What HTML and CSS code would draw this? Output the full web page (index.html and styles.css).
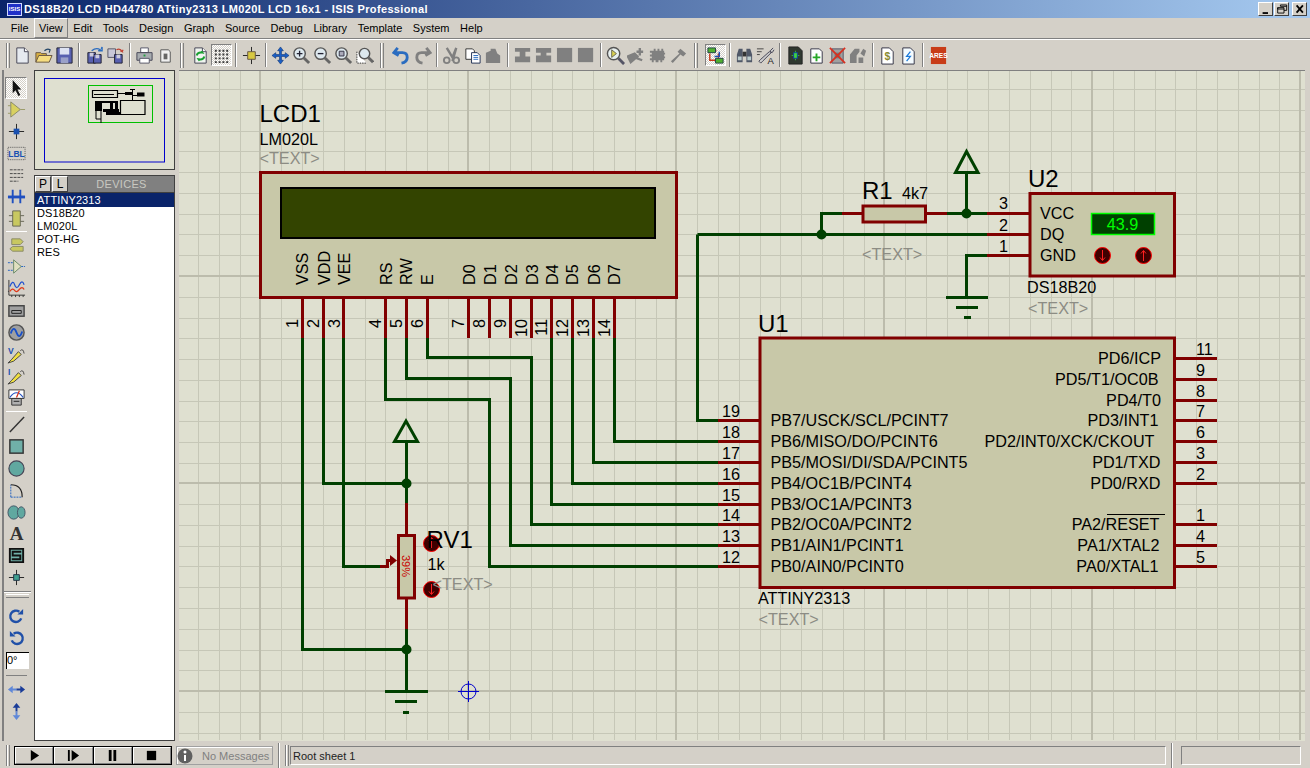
FILE: index.html
```html
<!DOCTYPE html>
<html lang="en">
<head>
<meta charset="utf-8">
<title>ISIS Professional</title>
<link rel="stylesheet" href="styles.css">
</head>
<body>
<header class="titlebar">
  <span class="logo">ISIS</span>
  <span class="title">DS18B20 LCD HD44780 ATtiny2313 LM020L LCD 16x1 - ISIS Professional</span>
  <span class="winbtns">
    <span class="winbtn"><svg viewBox="0 0 15 13"><path d="M4 10h6v2H4z"/></svg></span>
    <span class="winbtn"><svg viewBox="0 0 15 13"><path d="M6 2h7v6h-3M6 2v1.500h7M3 5h7v6H3zM3 5v1.500h7" fill="none" stroke="#000"/></svg></span>
    <span class="winbtn gap"><svg viewBox="0 0 15 13"><path d="M4 2.500l7 8M11 2.500l-7 8" stroke="#000" stroke-width="2"/></svg></span>
  </span>
</header>
<nav class="menubar">
  <span class="menu">File</span><span class="menu active">View</span><span class="menu">Edit</span><span class="menu">Tools</span><span class="menu">Design</span><span class="menu">Graph</span><span class="menu">Source</span><span class="menu">Debug</span><span class="menu">Library</span><span class="menu">Template</span><span class="menu">System</span><span class="menu">Help</span>
</nav>
<div class="toolbar">
  <i class="grip first"></i>
  <span class="btn"><svg viewBox="0 0 20 20"><path d="M4 2h8l4 4v12H4z" fill="#e6eaf0" stroke="#445"/><path d="M12 2v4h4" fill="#fff" stroke="#445"/></svg></span>
  <span class="btn"><svg viewBox="0 0 20 20"><path d="M2 17V7h5l1 1h5v2" fill="#d8b040" stroke="#654"/><path d="M2 17l3-7h14l-3 7z" fill="#f6dd80" stroke="#654"/><path d="M11 5q3-3 6-1l-1 3" fill="none" stroke="#246" stroke-width="1.200"/></svg></span>
  <span class="btn"><svg viewBox="0 0 20 20"><path d="M2 2h16v16H2z" fill="#5860b0" stroke="#223"/><path d="M5 2h10v7H5z" fill="#dde2f2"/><path d="M6 12h8v6H6z" fill="#9aa0c8"/></svg></span>
  <i class="sep"></i>
  <span class="btn"><svg viewBox="0 0 20 20"><path d="M3 7h8v11H3z" fill="#5860b0" stroke="#223"/><path d="M9 9h8v9H9z" fill="#5860b0" stroke="#223"/><path d="M5 7h4v4H5zM11 9h4v4h-4z" fill="#ccd"/><path d="M7 5q5-4 9-1l-2 1h4V1l-1 2" fill="none" stroke="#2a6cc0" stroke-width="1.400"/></svg></span>
  <span class="btn"><svg viewBox="0 0 20 20"><path d="M2 3h8v9H2z" fill="#c8c8d8" stroke="#556"/><path d="M9 9h8v9H9z" fill="#5860b0" stroke="#223"/><path d="M11 9h4v4h-4z" fill="#ccd"/><path d="M11 4q4-2 6 2l-2-1m2 1l1-2" fill="none" stroke="#c04030" stroke-width="1.300"/></svg></span>
  <i class="sep"></i>
  <span class="btn"><svg viewBox="0 0 20 20"><path d="M6 2h8v5H6z" fill="#fff" stroke="#556"/><path d="M2 7h16v8H2z" fill="#a8acb0" stroke="#445"/><path d="M5 13h10v5H5z" fill="#fff" stroke="#556"/><path d="M9 9h2v2H9z" fill="#20a040"/></svg></span>
  <span class="btn"><svg viewBox="0 0 20 20"><path d="M5 4h8l2 2v11H5z" fill="#f0f0f0" stroke="#555"/><path d="M8 8h4v6H8z" fill="#666"/></svg></span>
  <i class="grip mid"></i>
  <span class="btn"><svg viewBox="0 0 20 20"><path d="M4 2h8l4 4v12H4z" fill="#f0f4f0" stroke="#445"/><path d="M12 2v4h4" fill="#fff" stroke="#445"/><path d="M6 10q1-4 6-3l-1-1.500M14 11q-1 4-6 3l1 1.500" fill="none" stroke="#18a030" stroke-width="2"/></svg></span>
  <span class="btn on"><svg viewBox="0 0 20 20"><path d="M3 4h2v2H3zM7 4h2v2H7zM11 4h2v2h-2zM15 4h2v2h-2zM3 8h2v2H3zM7 8h2v2H7zM11 8h2v2h-2zM15 8h2v2h-2zM3 12h2v2H3zM7 12h2v2H7zM11 12h2v2h-2zM15 12h2v2h-2zM3 16h2v2H3zM7 16h2v2H7zM11 16h2v2h-2zM15 16h2v2h-2z" fill="#333"/></svg></span>
  <i class="sep"></i>
  <span class="btn"><svg viewBox="0 0 20 20"><path d="M10 1v18M1 10h18" stroke="#222"/><path d="M6 6h8v8H6z" fill="#d8c840" stroke="#654"/></svg></span>
  <i class="sep"></i>
  <span class="btn"><svg viewBox="0 0 20 20"><path d="M10 1l3 4h-2v4h4V7l4 3-4 3v-2h-4v4h2l-3 4-3-4h2v-4H5v2l-4-3 4-3v2h4V5H7z" fill="#1a60c8" stroke="#0a3070" stroke-width=".6"/></svg></span>
  <span class="btn"><svg viewBox="0 0 20 20"><circle cx="8" cy="8" r="6" fill="#dde8ee" stroke="#555" stroke-width="1.500"/><path d="M12 12l6 6" stroke="#666" stroke-width="3"/><path d="M5 8h6M8 5v6" stroke="#223" stroke-width="1.400"/></svg></span>
  <span class="btn"><svg viewBox="0 0 20 20"><circle cx="8" cy="8" r="6" fill="#dde8ee" stroke="#555" stroke-width="1.500"/><path d="M12 12l6 6" stroke="#666" stroke-width="3"/><path d="M5 8h6" stroke="#223" stroke-width="1.400"/></svg></span>
  <span class="btn"><svg viewBox="0 0 20 20"><circle cx="8" cy="8" r="6" fill="#dde8ee" stroke="#555" stroke-width="1.500"/><path d="M12 12l6 6" stroke="#666" stroke-width="3"/><path d="M5.500 5.500h5v5h-5z" fill="#aab" stroke="#334"/></svg></span>
  <span class="btn"><svg viewBox="0 0 20 20"><path d="M2 6v12h10" fill="#fff" stroke="#333" stroke-dasharray="1.500 1"/><circle cx="10" cy="8" r="5.500" fill="#dde8ee" stroke="#555" stroke-width="1.500"/><path d="M14 12l5 5" stroke="#666" stroke-width="3"/></svg></span>
  <i class="grip wide"></i>
  <span class="btn"><svg viewBox="0 0 20 20"><path d="M6 2L2 7l5 3M3 7h8q5 0 5 5t-6 6" fill="none" stroke="#2a6cc0" stroke-width="3"/></svg></span>
  <span class="btn"><svg viewBox="0 0 20 20"><path d="M14 2l4 5-5 3M17 7H9q-5 0-5 5t6 6" fill="none" stroke="#808080" stroke-width="3"/></svg></span>
  <i class="sep"></i>
  <span class="btn"><svg viewBox="0 0 20 20"><path d="M5 2l6 10 4-10-4 14M15 2" fill="none" stroke="#808080" stroke-width="2.500"/><circle cx="5" cy="15" r="3" fill="none" stroke="#808080" stroke-width="2"/><circle cx="15" cy="15" r="3" fill="none" stroke="#808080" stroke-width="2"/></svg></span>
  <span class="btn"><svg viewBox="0 0 20 20"><path d="M3 3h7l2 2v9H3z" fill="#fff" stroke="#333"/><path d="M9 7h6l3 3v8H9z" fill="#fff" stroke="#235"/><path d="M11 10h5M11 12h5M11 14h5" stroke="#2a6cc0"/></svg></span>
  <span class="btn"><svg viewBox="0 0 20 20"><path d="M2 7l5-2V3h5l2 5 3 2v8H2z" fill="#808080"/></svg></span>
  <i class="sep"></i>
  <span class="btn"><svg viewBox="0 0 20 20"><path d="M1 2h16v4h-5v5h5v6H1v-6h5V6H1z" fill="#808080"/></svg></span>
  <span class="btn"><svg viewBox="0 0 20 20"><path d="M1 2h16v5h-5v3h5v7H1v-7h5V7H1z" fill="#808080"/></svg></span>
  <span class="btn"><svg viewBox="0 0 20 20"><path d="M1 2h16v15H1z" fill="#808080"/></svg></span>
  <span class="btn"><svg viewBox="0 0 20 20"><path d="M1 2h16v15H1z" fill="#808080"/></svg></span>
  <i class="sep"></i>
  <span class="btn"><svg viewBox="0 0 20 20"><circle cx="8" cy="8" r="6.500" fill="#e8f0f0" stroke="#555" stroke-width="1.500"/><path d="M6 4l5 4-5 4z" fill="#d8d050" stroke="#665"/><path d="M13 13l6 6" stroke="#556" stroke-width="3"/></svg></span>
  <span class="btn"><svg viewBox="0 0 20 20"><path d="M1 11l7-3 3 3-7 6zM10 6h7M13.500 2v8M8 12l8 3" stroke="#808080" stroke-width="2.500" fill="#808080"/></svg></span>
  <span class="btn"><svg viewBox="0 0 20 20"><path d="M4 5h2V3h2v2h2V3h2v2h2V3h2v2h1v2h1v2h-1v2h1v2h-1v2h-2v2h-2v-2h-2v2H8v-2H6v2H4v-2H2v-2h2v-2H2V9h2V7H2V5z" fill="#808080"/></svg></span>
  <span class="btn"><svg viewBox="0 0 20 20"><path d="M9 6l3-3 6 5-3 3-3-2-8 9-2-2 9-8z" fill="#808080"/></svg></span>
  <i class="grip wide"></i>
  <span class="btn on"><svg viewBox="0 0 20 20"><path d="M11 5H5M4 8v7h6M13 8v6" fill="none" stroke="#c83818" stroke-width="1.500"/><path d="M14 6v5H9" fill="none" stroke="#2050b0" stroke-width="1.500"/><path d="M2 2h8v5H2zM10 13h8v5h-8z" fill="#50b030" stroke="#244"/></svg></span>
  <i class="sep"></i>
  <span class="btn"><svg viewBox="0 0 20 20"><path d="M2 9l2-6h4v14H2zM12 3h4l2 6v8h-6z" fill="#505868"/><path d="M8 6h4v5H8z" fill="#333"/><path d="M3 11h4v4H3zM13 11h4v4h-4z" fill="#bcc"/></svg></span>
  <span class="btn"><svg viewBox="0 0 20 20"><path d="M1 3h7M1 6h5M1 9h3" stroke="#444"/><path d="M18 2l-3 3 1 2-9 9-2 2-2-2 2-2 9-8 3 1 2-3" fill="#ccc" stroke="#445"/><text class="ico-a" x="12" y="19">A</text></svg></span>
  <i class="sep"></i>
  <span class="btn"><svg viewBox="0 0 20 20"><path d="M3 1h10l4 4v14H3z" fill="#303830" stroke="#222"/><path d="M6 10h8M10 5v10" stroke="#30c030"/><path d="M8 7h4v6H8z" fill="#40d040" stroke="#1040a0"/></svg></span>
  <span class="btn"><svg viewBox="0 0 20 20"><path d="M4 3h9l3 3v12H4z" fill="#fff" stroke="#334"/><path d="M9 8h2v3h3v2h-3v3H9v-3H6v-2h3z" fill="#28a828"/></svg></span>
  <span class="btn"><svg viewBox="0 0 20 20"><path d="M4 3h12v15H4z" fill="#a0a0a0" stroke="#556"/><path d="M7 7h6v6H7z" fill="#777"/><path d="M2 2l16 16M18 2L2 18" stroke="#d83020" stroke-width="1.800"/></svg></span>
  <span class="btn"><svg viewBox="0 0 20 20"><path d="M1 18V9l5-6h5v3l-3 4v8zM10 18v-6h5v6zM12 8l3-5 3 2-2 6z" fill="#808080"/></svg></span>
  <i class="sep"></i>
  <span class="btn"><svg viewBox="0 0 20 20"><path d="M4 2h8l4 4v13H4z" fill="#fff" stroke="#334"/><text class="ico-s" x="10" y="15">$</text></svg></span>
  <span class="btn"><svg viewBox="0 0 20 20"><path d="M4 2h8l4 4v13H4z" fill="#f4fbff" stroke="#334"/><path d="M12 6l-4 5h4l-4 5" fill="none" stroke="#1a78d8" stroke-width="1.300"/></svg></span>
  <i class="sep"></i>
  <span class="btn"><svg viewBox="0 0 20 20"><path d="M2 1h16v18H2z" fill="#c83c18"/><text class="ico-ares" x="10" y="13">ARES</text></svg></span>
</div>
<main class="workspace">
  <aside class="tools">
    <span class="tool on"><svg viewBox="0 0 20 20"><path d="M6 2v14l3-3 3 6 2-1-3-6h4z" fill="#111"/></svg></span>
    <span class="tool"><svg viewBox="0 0 20 20"><path d="M4 2l10 8-10 8z" fill="#d8d060" stroke="#886"/><path d="M14 10h5M1 6h3M1 14h3" stroke="#996"/></svg></span>
    <span class="tool"><svg viewBox="0 0 20 20"><path d="M10 2v16M2 10h16" stroke="#222"/><path d="M7 7h6v6H7z" fill="#1a50b0"/></svg></span>
    <span class="tool"><svg viewBox="0 0 20 20"><path d="M1 3.500h18v13H1z" fill="none" stroke="#555" stroke-dasharray="1 1"/><text class="ico-lbl" x="10" y="14">LBL</text></svg></span>
    <span class="tool"><svg viewBox="0 0 20 20"><path d="M3 4h14M3 8h14M3 12h14M3 16h9" stroke="#444" stroke-dasharray="3 1" fill="none"/></svg></span>
    <span class="tool"><svg viewBox="0 0 20 20"><path d="M6 3v14M14 3v14" stroke="#2050c0" stroke-width="2"/><path d="M1 9h18v3H1z" fill="#2050c0"/></svg></span>
    <span class="tool"><svg viewBox="0 0 20 20"><path d="M6 2h8v16H6z" fill="#c8c860" stroke="#665"/><path d="M2 7h4M2 13h4M14 7h4M14 13h4" stroke="#665"/></svg></span>
    <i class="tsep s1"></i>
    <span class="tool"><svg viewBox="0 0 20 20"><path d="M5 3h9l3 3-3 3H5zM6 11h11v5H6l-3-2.500z" fill="#c8c860" stroke="#886"/></svg></span>
    <span class="tool"><svg viewBox="0 0 20 20"><path d="M7 3l8 7-8 7z" fill="#e0e0c0" stroke="#686"/><path d="M1 6h6M1 14h6M15 10h4" stroke="#2060c0" stroke-dasharray="2 1"/></svg></span>
    <span class="tool"><svg viewBox="0 0 20 20"><path d="M2 1v16h17M2 13h-1M5 17v2M9 17v2M13 17v2M17 17v2" fill="none" stroke="#333"/><path d="M3 8q3-8 5-2t5 0 5 0" fill="none" stroke="#2050d0" stroke-width="1.300"/><path d="M3 13q3-4 5-1t5-1 5 0" fill="none" stroke="#e03818" stroke-width="1.300"/></svg></span>
    <span class="tool"><svg viewBox="0 0 20 20"><rect x="2" y="5" width="16" height="11" fill="#a0a0a0" stroke="#444" stroke-width="1.500"/><path d="M5 10h10v3H5z" fill="none" stroke="#222"/></svg></span>
    <span class="tool"><svg viewBox="0 0 20 20"><circle cx="10" cy="10" r="8" fill="#a0a0a0" stroke="#555" stroke-width="1.500"/><path d="M4 11q3-9 6-1t6-1" fill="none" stroke="#1a50c8" stroke-width="2"/></svg></span>
    <span class="tool"><svg viewBox="0 0 20 20"><text class="ico-v" x="1" y="9">V</text><path d="M1 19l4-4 7-8 3 3-8 7z" fill="#f0e040" stroke="#444"/><path d="M14 6q3-3 4 3" fill="none" stroke="#444"/></svg></span>
    <span class="tool"><svg viewBox="0 0 20 20"><text class="ico-v" x="1" y="9">I</text><path d="M1 19l4-4 7-8 3 3-8 7z" fill="#f0e040" stroke="#444"/><path d="M14 6q3-3 4 3" fill="none" stroke="#444"/></svg></span>
    <span class="tool"><svg viewBox="0 0 20 20"><path d="M2 2h16v9H2z" fill="#fff" stroke="#333"/><path d="M3 10q7-10 14 0" fill="none" stroke="#2050c0" stroke-width="1.300"/><path d="M10 10l3-7" stroke="#d83018" stroke-width="1.300"/><path d="M5 11h10v7H5z" fill="#b0b0b0" stroke="#333"/><path d="M7 14h6" stroke="#222"/></svg></span>
    <i class="tsep s2"></i>
    <span class="tool"><svg viewBox="0 0 20 20"><path d="M3 18L18 2" stroke="#333" stroke-width="1.500"/></svg></span>
    <span class="tool"><svg viewBox="0 0 20 20"><rect x="3" y="3" width="14" height="14" fill="#70b0a8" stroke="#333" stroke-width="1.500"/></svg></span>
    <span class="tool"><svg viewBox="0 0 20 20"><circle cx="10" cy="10" r="8" fill="#60a8a0" stroke="#445" stroke-width="1.200"/></svg></span>
    <span class="tool"><svg viewBox="0 0 20 20"><path d="M4 17V4" stroke="#2060c0" stroke-dasharray="2 1"/><path d="M4 17h12" stroke="#2060c0" stroke-dasharray="2 1"/><path d="M4 4q12 0 12 13" fill="none" stroke="#222" stroke-width="1.200"/></svg></span>
    <span class="tool"><svg viewBox="0 0 20 20"><ellipse cx="7" cy="10" rx="6" ry="7" fill="#60a8a0" stroke="#456"/><ellipse cx="15" cy="10" rx="4" ry="6" fill="#60a8a0" stroke="#456"/></svg></span>
    <span class="tool"><svg viewBox="0 0 20 20"><text class="ico-big" x="10" y="17">A</text></svg></span>
    <span class="tool"><svg viewBox="0 0 20 20"><path d="M3 3h14v14H3z" fill="#70b0a8" stroke="#111" stroke-width="2"/><path d="M15 6H6v4h8v4H5" fill="none" stroke="#111" stroke-width="2"/></svg></span>
    <span class="tool"><svg viewBox="0 0 20 20"><path d="M10 2v16M2 10h16" stroke="#222"/><path d="M7 7h6v6H7z" fill="#40a090" stroke="#234"/></svg></span>
    <i class="tsep s3"></i>
    <span class="tool"><svg viewBox="0 0 20 20"><path d="M15 12a6 6 0 1 1-2-7" fill="none" stroke="#2050a8" stroke-width="2.500"/><path d="M11 8h6V2z" fill="#2050a8"/></svg></span>
    <span class="tool"><svg viewBox="0 0 20 20"><path d="M5 12a6 6 0 1 0 2-7" fill="none" stroke="#2050a8" stroke-width="2.500"/><path d="M9 8H3V2z" fill="#2050a8"/></svg></span>
    <span class="angle">0°</span>
    <i class="tsep s4"></i>
    <span class="tool"><svg viewBox="0 0 20 20"><path d="M1 10l5-4v3h4v2H6v3z" fill="#6088d8"/><path d="M19 10l-5-4v3h-4v2h4v3z" fill="#1a3c98"/></svg></span>
    <span class="tool"><svg viewBox="0 0 20 20"><path d="M10 1L6 6h3v4h2V6h3z" fill="#1a3c98"/><path d="M10 19l-4-5h3v-4h2v4h3z" fill="#6088d8"/></svg></span>
  </aside>
  <section class="side">
    <div class="overview">
      <svg viewBox="34 70 141 100">
        <rect class="ov-blue" x="44.500" y="78.500" width="120" height="83.500"/>
        <rect class="ov-green" x="88.500" y="85.500" width="64" height="37"/>
        <path class="ov-out" d="M92.500 90.500h25v7h-25zM120.500 100.500h24.500v14h-24.500z"/>
        <path class="ov-ink" d="M95 101h7v10h-7zM102 101h16v2h-16zM110 103h3v8h-3zM115 103h3v6h-3zM103 109h16v3h-16zM106 112h14v3h-14zM125 92h7v3h-7zM137 92.500h7.500v4H137zM94 94h20v1H94z"/>
        <path class="ov-line" d="M96 111v8h5v-8M101 119v4M117.500 93.500h15M132.500 89v12M130 100.500h5M132 95.500h5M130 89.500h5"/>
      </svg>
    </div>
    <div class="devices">
      <div class="dev-head"><span class="dev-btn">P</span><span class="dev-btn">L</span><span class="dev-title">DEVICES</span></div>
      <ul class="dev-list">
        <li class="sel">ATTINY2313</li>
        <li>DS18B20</li>
        <li>LM020L</li>
        <li>POT-HG</li>
        <li>RES</li>
      </ul>
    </div>
  </section>
  <section class="sheet">
    <svg viewBox="179 70 1126 670">
      <path class="grid" d="M198.500 70V740M219.500 70V740M240.500 70V740M281.500 70V740M302.500 70V740M323.500 70V740M344.500 70V740M365.500 70V740M385.500 70V740M406.500 70V740M427.500 70V740M448.500 70V740M489.500 70V740M510.500 70V740M531.500 70V740M552.500 70V740M572.500 70V740M593.500 70V740M614.500 70V740M635.500 70V740M656.500 70V740M697.500 70V740M718.500 70V740M739.500 70V740M760.500 70V740M780.500 70V740M801.500 70V740M822.500 70V740M843.500 70V740M864.500 70V740M905.500 70V740M926.500 70V740M947.500 70V740M967.500 70V740M988.500 70V740M1009.500 70V740M1030.500 70V740M1051.500 70V740M1071.500 70V740M1113.500 70V740M1134.500 70V740M1155.500 70V740M1175.500 70V740M1196.500 70V740M1217.500 70V740M1238.500 70V740M1259.500 70V740M1279.500 70V740"/>
      <path class="grid" d="M179 89.500H1305M179 110.500H1305M179 131.500H1305M179 151.500H1305M179 172.500H1305M179 193.500H1305M179 214.500H1305M179 234.500H1305M179 255.500H1305M179 297.500H1305M179 318.500H1305M179 338.500H1305M179 359.500H1305M179 380.500H1305M179 401.500H1305M179 421.500H1305M179 442.500H1305M179 463.500H1305M179 504.500H1305M179 525.500H1305M179 546.500H1305M179 566.500H1305M179 587.500H1305M179 608.500H1305M179 629.500H1305M179 650.500H1305M179 670.500H1305M179 712.500H1305M179 733.500H1305"/>
      <path class="grid major" d="M260 70V740M468 70V740M676 70V740M884 70V740M1092 70V740M1300 70V740M179 276H1305M179 483H1305M179 691H1305"/>

      <!-- LCD1 -->
      <rect class="body" x="260.500" y="172.500" width="416" height="125"/>
      <rect class="lcd" x="281" y="188" width="374" height="50"/>
      <path class="pin" d="M302.500 298V338M323.500 298V338M343.500 298V338M385.500 298V338M406.500 298V338M427.500 298V338M468.500 298V338M489.500 298V338M510.500 298V338M531.500 298V338M551.500 298V338M572.500 298V338M593.500 298V338M614.500 298V338"/>
      <path class="wire" d="M302.500 338V649.500H406.500M323.500 338V483.500H406.500M343.500 338V566.500H380M427.500 338V357.500H531.500V524.500H718M406.500 338V378.500H510.500V545.500H718M385.500 338V399.500H489.500V566.500H718M551.500 338V504.500H718M572.500 338V483.500H718M593.500 338V462.500H718M614.500 338V441.500H718M697.500 234.500V420.500H718"/>
      <g class="lbl">
        <text transform="translate(308 285) rotate(-90)">VSS</text>
        <text transform="translate(330 285) rotate(-90)">VDD</text>
        <text transform="translate(350 285) rotate(-90)">VEE</text>
        <text transform="translate(391.500 285) rotate(-90)">RS</text>
        <text transform="translate(412 285) rotate(-90)">RW</text>
        <text transform="translate(433 285) rotate(-90)">E</text>
        <text transform="translate(475 285) rotate(-90)">D0</text>
        <text transform="translate(496 285) rotate(-90)">D1</text>
        <text transform="translate(517 285) rotate(-90)">D2</text>
        <text transform="translate(537.500 285) rotate(-90)">D3</text>
        <text transform="translate(557.500 285) rotate(-90)">D4</text>
        <text transform="translate(578 285) rotate(-90)">D5</text>
        <text transform="translate(599.500 285) rotate(-90)">D6</text>
        <text transform="translate(620 285) rotate(-90)">D7</text>
      </g>
      <g class="lbl end">
        <text transform="translate(298 319) rotate(-90)">1</text>
        <text transform="translate(319 319) rotate(-90)">2</text>
        <text transform="translate(340 319) rotate(-90)">3</text>
        <text transform="translate(381 319) rotate(-90)">4</text>
        <text transform="translate(402 319) rotate(-90)">5</text>
        <text transform="translate(423 319) rotate(-90)">6</text>
        <text transform="translate(463.500 319) rotate(-90)">7</text>
        <text transform="translate(485 319) rotate(-90)">8</text>
        <text transform="translate(506 319) rotate(-90)">9</text>
        <text transform="translate(527 319) rotate(-90)">10</text>
        <text transform="translate(547 319) rotate(-90)">11</text>
        <text transform="translate(568 319) rotate(-90)">12</text>
        <text transform="translate(589 319) rotate(-90)">13</text>
        <text transform="translate(610 319) rotate(-90)">14</text>
      </g>
      <text class="ref" x="259.500" y="121.500">LCD1</text>
      <text class="lbl" x="259.500" y="145">LM020L</text>
      <text class="lbl ghost" x="259.500" y="164">&lt;TEXT&gt;</text>

      <!-- U1 -->
      <rect class="body" x="760" y="338" width="414.500" height="249.500"/>
      <path class="pin" d="M718 420.500H759M718 441.500H759M718 462.500H759M718 483.500H759M718 504.500H759M718 524.500H759M718 545.500H759M718 566.500H759M1176 358.500H1217M1176 379.500H1217M1176 400.500H1217M1176 420.500H1217M1176 441.500H1217M1176 462.500H1217M1176 483.500H1217M1176 524.500H1217M1176 545.500H1217M1176 566.500H1217"/>
      <g class="lbl">
        <text x="770.500" y="425.500">PB7/USCK/SCL/PCINT7</text>
        <text x="770.500" y="446.500">PB6/MISO/DO/PCINT6</text>
        <text x="770.500" y="467.500">PB5/MOSI/DI/SDA/PCINT5</text>
        <text x="770.500" y="488.500">PB4/OC1B/PCINT4</text>
        <text x="770.500" y="509.500">PB3/OC1A/PCINT3</text>
        <text x="770.500" y="529.500">PB2/OC0A/PCINT2</text>
        <text x="770.500" y="550.500">PB1/AIN1/PCINT1</text>
        <text x="770.500" y="571.500">PB0/AIN0/PCINT0</text>
        <text x="722" y="416.500">19</text>
        <text x="722" y="437.500">18</text>
        <text x="722" y="458.500">17</text>
        <text x="722" y="479.500">16</text>
        <text x="722" y="500.500">15</text>
        <text x="722" y="520.500">14</text>
        <text x="722" y="541.500">13</text>
        <text x="722" y="562.500">12</text>
        <text x="1196" y="354.500">11</text>
        <text x="1196" y="375.500">9</text>
        <text x="1196" y="396.500">8</text>
        <text x="1196" y="416.500">7</text>
        <text x="1196" y="437.500">6</text>
        <text x="1196" y="458.500">3</text>
        <text x="1196" y="479.500">2</text>
        <text x="1196" y="520.500">1</text>
        <text x="1196" y="541.500">4</text>
        <text x="1196" y="562.500">5</text>
      </g>
      <g class="lbl end">
        <text x="1161" y="363.500">PD6/ICP</text>
        <text x="1158.500" y="384.500">PD5/T1/OC0B</text>
        <text x="1161" y="405.500">PD4/T0</text>
        <text x="1158.500" y="425.500">PD3/INT1</text>
        <text x="1154.500" y="446.500">PD2/INT0/XCK/CKOUT</text>
        <text x="1160.500" y="467.500">PD1/TXD</text>
        <text x="1160.500" y="488.500">PD0/RXD</text>
        <text x="1159.500" y="529.500">PA2/RESET</text>
        <text x="1159.500" y="550.500">PA1/XTAL2</text>
        <text x="1158.500" y="571.500">PA0/XTAL1</text>
      </g>
      <path class="over" d="M1107 514.500H1165"/>
      <text class="ref" x="758" y="331.500">U1</text>
      <text class="lbl" x="758" y="603.500">ATTINY2313</text>
      <text class="lbl ghost" x="758.500" y="625">&lt;TEXT&gt;</text>

      <!-- R1 and U2 -->
      <path class="wire" d="M697.500 234.500H987M821.500 234.500V213.500H842M947 213.500H987M966.500 213.500V172M955.500 172.500H978L966.500 151.500ZM987 255.500H966.500V297M946 297.500H988M956 307.500H978M964 317.500H971"/>
      <path class="pin" d="M842 213.500H862M927 213.500H947M987 213.500H1029M987 234.500H1029M987 255.500H1029"/>
      <circle class="dot" cx="821.500" cy="234.500" r="5"/>
      <circle class="dot" cx="966.500" cy="213.500" r="5"/>
      <rect class="body" x="863" y="206" width="62.500" height="16"/>
      <rect class="body" x="1030" y="193.500" width="144.500" height="82.500"/>
      <text class="ref" x="862" y="198.500">R1</text>
      <text class="lbl" x="902" y="198.500">4k7</text>
      <text class="lbl ghost" x="862" y="259.500">&lt;TEXT&gt;</text>
      <text class="ref" x="1028" y="186.500">U2</text>
      <text class="lbl" x="1027" y="293">DS18B20</text>
      <text class="lbl ghost" x="1028" y="313.500">&lt;TEXT&gt;</text>
      <g class="lbl">
        <text x="1040" y="219">VCC</text>
        <text x="1040" y="240">DQ</text>
        <text x="1040" y="261">GND</text>
        <text x="999" y="209">3</text>
        <text x="999" y="230.500">2</text>
        <text x="999" y="251.500">1</text>
      </g>
      <rect class="display" x="1091.500" y="213.500" width="63" height="21"/>
      <text class="reading" x="1122.500" y="229.500">43.9</text>
      <g class="act"><circle cx="1102.500" cy="255.500" r="8"/><path d="M1102.500 250V260M1100 257.500L1102.500 260.500 1105 257.500"/></g>
      <g class="act"><circle cx="1143.500" cy="255.500" r="8"/><path d="M1143.500 251V261M1141 253.500L1143.500 250.500 1146 253.500"/></g>

      <!-- RV1 -->
      <path class="wire" d="M406.500 441V503M394.500 441.500H417.500L406 421ZM406.500 629V691M385 691.500H428M395 701.500H417M403 712.500H409"/>
      <path class="pin" d="M406.500 503V534M406.500 599V629M380 566.500H387.500V560.500H394"/>
      <path class="arrow" d="M390 555L397 560.500 390 566Z"/>
      <circle class="dot" cx="406.500" cy="483.500" r="5"/>
      <circle class="dot" cx="406.500" cy="649.500" r="5"/>
      <rect class="body" x="398.500" y="535.500" width="16" height="62.500"/>
      <text class="pct" transform="translate(402 555) rotate(90)">39%</text>
      <g class="act"><circle cx="431.500" cy="543.500" r="8"/><path d="M431.500 538V548M429 540.500L431.500 537.500 434 540.500"/></g>
      <g class="act"><circle cx="431.500" cy="589.500" r="8"/><path d="M431.500 584V594M429 591.500L431.500 594.500 434 591.500"/></g>
      <text class="ref" x="426.500" y="547.500">RV1</text>
      <text class="lbl" x="427.500" y="570">1k</text>
      <text class="lbl ghost" x="432.500" y="590">&lt;TEXT&gt;</text>

      <!-- cursor -->
      <g class="cursor"><circle cx="468.500" cy="691.500" r="7.500"/><path d="M458 691.500H479M468.500 681V702"/></g>
    </svg>
  </section>
</main>
<footer class="status">
  <i class="grip low"></i>
  <div class="transport">
    <span class="play"><svg viewBox="0 0 14 14"><path d="M3 1l9 6-9 6z"/></svg></span>
    <span class="play"><svg viewBox="0 0 14 14"><path d="M1 1h2v12H1zM5 1l8 6-8 6z"/></svg></span>
    <span class="play"><svg viewBox="0 0 14 14"><path d="M3 1h3v12H3zM8 1h3v12H8z"/></svg></span>
    <span class="play"><svg viewBox="0 0 14 14"><path d="M2 2h10v10H2z"/></svg></span>
  </div>
  <div class="messages">
    <svg class="info" viewBox="0 0 16 16"><circle cx="8" cy="8" r="7.500" fill="#606060"/><circle cx="8" cy="4" r="1.500" fill="#fff"/><path d="M7 7h2v6H7z" fill="#fff"/></svg>
    <span class="msg-text">No Messages</span>
  </div>
  <i class="ssep"></i>
  <i class="grip low"></i>
  <div class="sunken main-status">Root sheet 1</div>
  <i class="ssep"></i>
  <div class="sunken coords"></div>
</footer>
</body>
</html>
```
FILE: styles.css
```css
* { box-sizing: border-box; }
html, body { margin: 0; padding: 0; }
body {
  width: 1310px;
  height: 768px;
  overflow: hidden;
  display: flex;
  flex-direction: column;
  background: #d4d0c8;
  color: #000;
  font-family: "Liberation Sans", Arial, sans-serif;
  font-size: 11px;
}
svg { display: block; }

/* title bar */
.titlebar {
  height: 18px;
  flex: none;
  display: flex;
  align-items: center;
  padding-left: 7px;
  background: linear-gradient(90deg, #0a246a, #a6caf0);
  color: #fff;
}
.logo {
  width: 15px;
  height: 13px;
  margin-right: 2px;
  background: #2030c8;
  border: 1px solid #d0d8ff;
  font-size: 6px;
  font-weight: bold;
  line-height: 11px;
  text-align: center;
}
.title { font-weight: bold; font-size: 11px; letter-spacing: .36px; white-space: nowrap; }
.winbtns { margin-left: auto; display: flex; padding-right: 3px; }
.winbtn {
  width: 15.500px;
  height: 14px;
  margin-left: .5px;
  background: #d4d0c8;
  border: 1px solid;
  border-color: #fff #404040 #404040 #fff;
}
.winbtn.gap { margin-left: 2.500px; }
.winbtn svg { width: 100%; height: 100%; }

/* menu bar */
.menubar {
  height: 21px;
  flex: none;
  display: flex;
  align-items: center;
  padding-left: 5.500px;
  border-bottom: 1px solid #808080;
  font-size: 11px;
}
.menu { padding: 3px 4.500px; border: 1px solid transparent; margin: 0 -.22px; }
.menu.active { border-color: #fff #808080 #808080 #fff; }

/* main toolbar */
.toolbar {
  height: 31px;
  flex: none;
  display: flex;
  align-items: center;
  padding-left: 5px;
  border-top: 1px solid #fff;
}
.btn {
  width: 21px;
  height: 22px;
  flex: none;
  display: flex;
  align-items: center;
  justify-content: center;
  border: 1px solid transparent;
}
.btn svg { width: 19px; height: 19px; flex: none; }
.btn.on, .tool.on {
  border-color: #808080 #fff #fff #808080;
  background-image: repeating-conic-gradient(#fff 0 25%, #d4d0c8 0 50%);
  background-size: 2px 2px;
}
.sep {
  width: 8.500px;
  height: 24px;
  flex: none;
  background: linear-gradient(#808080, #808080) 3px 0 / 1px 100% no-repeat,
              linear-gradient(#fff, #fff) 4px 0 / 1px 100% no-repeat;
}
.grip {
  width: 12px;
  height: 25px;
  flex: none;
  background: linear-gradient(#808080, #808080) 4px 0 / 1px 100% no-repeat,
              linear-gradient(#fff, #fff) 5px 0 / 1px 100% no-repeat,
              linear-gradient(#808080, #808080) 7px 0 / 1px 100% no-repeat;
}
.grip.first { width: 7px; background-position: 1px 0, 2px 0, 4px 0; }
.grip.mid { width: 14px; }
.grip.wide { width: 15.500px; background-position: 5px 0, 6px 0, 8px 0; }
.grip.low { width: 8px; height: 21px; background-position: 1px 0, 2px 0, 4px 0; }

.ico-a { font-size: 10px; fill: #222; }
.ico-s { font-size: 11px; font-weight: bold; fill: #8a8a30; text-anchor: middle; }
.ico-ares { font-size: 7px; font-weight: bold; fill: #fff; text-anchor: middle; }
.ico-lbl { font-size: 9px; font-weight: bold; fill: #1a50b0; text-anchor: middle; }
.ico-v { font-size: 9px; font-weight: bold; fill: #1a50b0; }
.ico-big { font-family: "Liberation Serif", serif; font-size: 20px; font-weight: bold; fill: #333; text-anchor: middle; }

/* workspace */
.workspace { flex: 1; min-height: 0; display: flex; }

.tools {
  width: 34px;
  flex: none;
  padding: 7px 0 0 6px;
  display: flex;
  flex-direction: column;
  align-items: flex-start;
  background: linear-gradient(#808080, #808080) 2px 0 / 2px 100% no-repeat;
}
.tool {
  width: 22px;
  height: 21.800px;
  flex: none;
  margin-left: -1px;
  display: flex;
  align-items: center;
  justify-content: center;
  border: 1px solid transparent;
}
.tool svg { width: 19px; height: 19px; flex: none; }
.tool.on { border-color: #808080 #fff #fff #808080; }
.tsep {
  width: 21px;
  flex: none;
  background: linear-gradient(#fff, #fff) 0 50% / 100% 1px no-repeat;
}
.tsep.s1 { height: 4.600px; }
.tsep.s2 { height: 5.400px; }
.tsep.s3 {
  height: 17.600px;
  margin-left: -2px;
  width: 27px;
  background: linear-gradient(#808080, #808080) 0 3px / 100% 1px no-repeat,
              linear-gradient(#fff, #fff) 0 4px / 100% 1px no-repeat,
              linear-gradient(#fff, #fff) 2px 6px / 23px 1px no-repeat,
              linear-gradient(#808080, #808080) 2px 9px / 23px 1px no-repeat;
}
.tsep.s4 { height: 7px; margin-top: 3px; background: linear-gradient(#808080, #808080) 0 50% / 100% 1px no-repeat; }
.angle {
  width: 23px;
  height: 17px;
  margin-top: 2px;
  flex: none;
  background: #fff;
  border-top: 1px solid #000;
  border-left: 1px solid #000;
  font-size: 11px;
  line-height: 15px;
}

.side {
  width: 141px;
  flex: none;
  display: flex;
  flex-direction: column;
  gap: 5px;
}
.overview {
  height: 100px;
  flex: none;
  background: #dfe0d0;
  box-shadow: inset 0 0 0 1px #404040;
}
.overview svg { width: 141px; height: 100px; }
.ov-blue { fill: none; stroke: #0000cc; }
.ov-green { fill: none; stroke: #00c000; }
.ov-out { fill: none; stroke: #000; stroke-width: 1.200; }
.ov-ink { fill: #000; }
.ov-line { fill: none; stroke: #000; }

.devices {
  flex: 1;
  min-height: 0;
  display: flex;
  flex-direction: column;
  background: #fff;
  border: 1px solid #404040;
}
.dev-head { height: 17px; flex: none; display: flex; background: #808080; border-bottom: 1px solid #404040; }
.dev-btn {
  width: 16px;
  height: 16px;
  margin-right: 1px;
  background: #d4d0c8;
  border: 1px solid;
  border-color: #fff #404040 #404040 #fff;
  text-align: center;
  font-size: 12px;
  line-height: 14px;
}
.dev-title { flex: 1; color: #c8c8c0; text-align: center; font-size: 11px; letter-spacing: .3px; line-height: 16px; }
.dev-list { list-style: none; margin: 0; padding: 0; font-size: 11px; letter-spacing: .1px; }
.dev-list li { height: 13px; line-height: 13px; padding-left: 2px; }
.dev-list li.sel { height: 14px; line-height: 15px; background: #0a246a; color: #fff; }

.sheet { width: 1126px; margin-left: 4px; flex: none; background: #dfe0d0; border-top: 1px solid #808080; overflow: hidden; }
.sheet svg { width: 1126px; height: 670px; margin-top: -1px; }

.grid { fill: none; stroke: #c6c7b7; stroke-width: 1; }
.grid.major { stroke: #bcbcac; stroke-width: 2; }
.body { fill: #c8c8a8; stroke: #800000; stroke-width: 3; }
.lcd { fill: #334400; stroke: #000; stroke-width: 2; }
.pin { fill: none; stroke: #800000; stroke-width: 3; }
.wire { fill: none; stroke: #004000; stroke-width: 3; }
.dot { fill: #004000; }
.arrow { fill: #800000; }
.over { fill: none; stroke: #000; stroke-width: 1; }
.lbl { font-size: 16.200px; fill: #000; }
.lbl.end { text-anchor: end; }
.ghost { fill: #8c8c84; }
.ref { font-size: 24px; fill: #000; }
.pct { font-size: 11px; fill: #c80000; }
.display { fill: #004000; stroke: #00ff00; stroke-width: 1.500; }
.reading { font-size: 16.200px; fill: #00ff00; text-anchor: middle; }
.act circle { fill: #400000; stroke: #ff0000; stroke-width: 1; }
.act path { fill: none; stroke: #ff2020; stroke-width: 1; }
.cursor circle, .cursor path { fill: none; stroke: #0000cc; stroke-width: 1; }

/* status bar */
.status {
  height: 27px;
  flex: none;
  display: flex;
  align-items: center;
  padding: 2px 4px 0 5px;
}
.transport {
  width: 158px;
  height: 19px;
  margin-left: 1px;
  flex: none;
  display: flex;
  gap: 1px;
  background: #000;
  padding: 1px;
}
.play {
  flex: 1;
  display: flex;
  align-items: center;
  justify-content: center;
  background: #d4d0c8;
  border: 1px solid;
  border-color: #fff #808080 #808080 #fff;
}
.play svg { width: 13px; height: 13px; fill: #000; }
.messages {
  width: 97px;
  height: 19px;
  margin-left: 4px;
  flex: none;
  display: flex;
  align-items: center;
  gap: 9px;
  border: 1px solid #a0a0a0;
  box-shadow: inset 1px 1px 0 #fff;
  color: #808080;
  font-size: 11px;
}
.msg-text { white-space: nowrap; }
.info { width: 16px; height: 16px; flex: none; }
.ssep {
  width: 11px;
  height: 25px;
  flex: none;
  background: linear-gradient(#808080, #808080) 5px 0 / 1px 100% no-repeat,
              linear-gradient(#fff, #fff) 6px 0 / 1px 100% no-repeat;
}
.sunken {
  height: 19px;
  border: 1px solid;
  border-color: #808080 #fff #fff #808080;
  padding-left: 2px;
  line-height: 19px;
  font-size: 11px;
  color: #222;
}
.main-status { flex: none; width: 876px; margin-left: -2px; }
.coords { flex: none; width: 120px; margin-left: 4px; }
```
